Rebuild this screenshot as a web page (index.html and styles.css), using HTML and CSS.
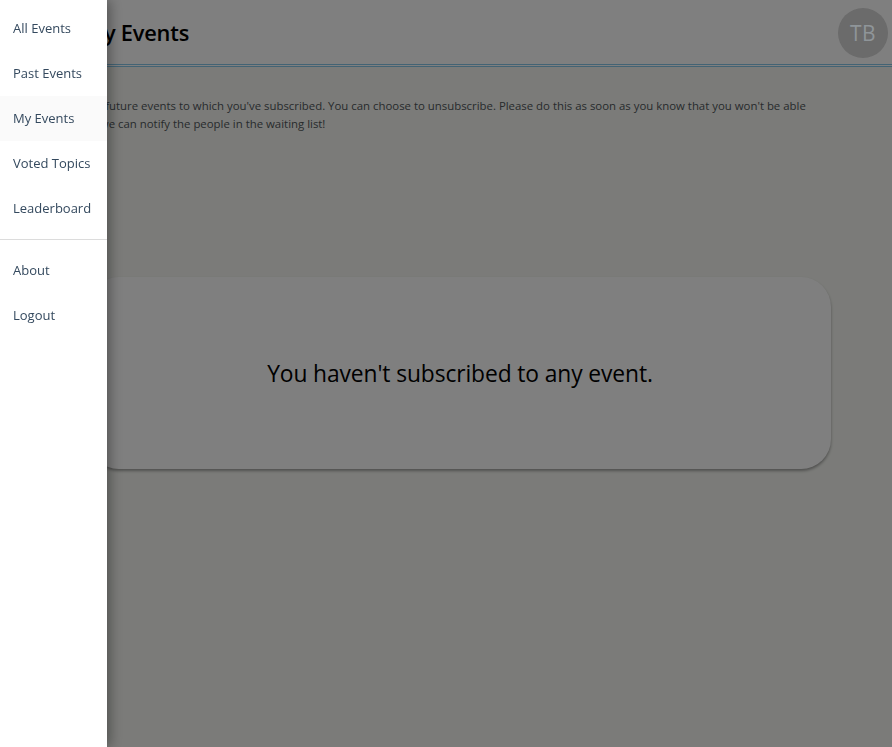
FILE: index.html
```html
<!DOCTYPE html>
<html lang="en">
<head>
<meta charset="utf-8">
<title>My Events</title>
<link rel="stylesheet" href="styles.css">
</head>
<body>
<div class="page">
  <header class="topbar">
    <h1 class="title">My Events</h1>
    <div class="avatar">TB</div>
  </header>
  <main class="content">
    <p class="intro">These are the future events to which you've subscribed. You can choose to unsubscribe. Please do this as soon as you know that you won't be able to attend, so we can notify the people in the waiting list!</p>
    <section class="card">
      <p class="empty">You haven't subscribed to any event.</p>
    </section>
  </main>
</div>
<div class="backdrop"></div>
<nav class="drawer">
  <ul class="menu">
    <li class="item">All Events</li>
    <li class="item">Past Events</li>
    <li class="item active">My Events</li>
    <li class="item">Voted Topics</li>
    <li class="item">Leaderboard</li>
  </ul>
  <hr class="divider">
  <ul class="menu">
    <li class="item">About</li>
    <li class="item">Logout</li>
  </ul>
</nav>
</body>
</html>
```
FILE: styles.css
```css
* { box-sizing: border-box; }
html, body { margin: 0; height: 100%; }
body {
  font-family: "Open Sans", "Noto Sans", sans-serif;
  background: #f6f7f2;
  color: #222;
}
.page { min-height: 100%; }
.topbar {
  height: 67px;
  background: #ffffff;
  border-bottom: 3px double #86c6e8;
  display: flex;
  align-items: center;
  justify-content: space-between;
  padding: 0 4px 0 84px;
}
.title {
  margin: 0;
  font-size: 21.8px;
  font-weight: 600;
  color: #000;
  letter-spacing: -0.2px;
}
.avatar {
  position: relative;
  z-index: 20;
  width: 50px;
  height: 50px;
  border-radius: 50%;
  background: #6b6b6b;
  color: #8f9599;
  font-size: 21px;
  display: flex;
  align-items: center;
  justify-content: center;
  letter-spacing: 0.5px;
  margin-top: 2px;
}
.content {
  padding: 30px 61px 0 30px;
}
.intro {
  margin: 0;
  font-size: 11.4px;
  line-height: 18px;
  color: #50565a;
  padding-right: 18px;
}
.card {
  margin-top: 144px;
  margin-left: 59px;
  height: 192px;
  background: #ffffff;
  border-radius: 30px;
  box-shadow: 0 2px 3px rgba(0,0,0,0.35);
  display: flex;
  align-items: center;
  justify-content: center;
}
.empty {
  margin: 0;
  font-size: 22.8px;
  color: #000;
  letter-spacing: -0.1px;
}
.backdrop {
  position: fixed;
  inset: 0;
  background: rgba(0,0,0,0.5);
  z-index: 10;
}
.drawer {
  position: fixed;
  top: 0;
  left: 0;
  bottom: 0;
  width: 107px;
  background: #ffffff;
  z-index: 30;
  box-shadow: 3px 0 12px rgba(0,0,0,0.35);
  padding-top: 6px;
}
.menu {
  list-style: none;
  margin: 0;
  padding: 0;
}
.item {
  height: 45px;
  display: flex;
  align-items: center;
  padding: 0 0 2px 13px;
  font-size: 13px;
  color: #34495e;
  white-space: nowrap;
}
.item.active { background: #fafafa; }
.divider {
  margin: 8px 0 8px;
  border: 0;
  border-top: 1px solid #dcdcdc;
}
```
